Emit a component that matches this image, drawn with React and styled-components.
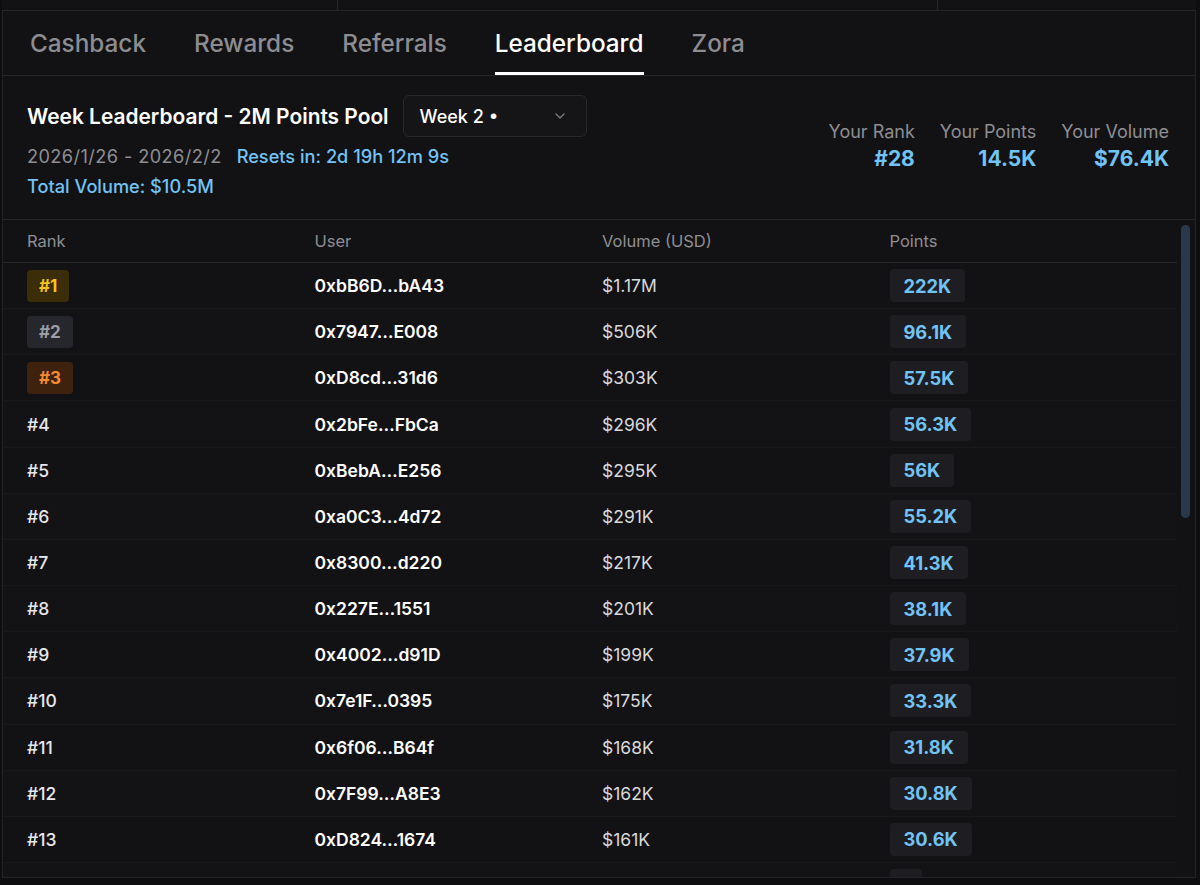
import styled, { createGlobalStyle, css } from "styled-components";

const Global = createGlobalStyle`
  html, body {
    margin: 0;
    padding: 0;
    background: #0e0e10;
    font-family: Inter, "Liberation Sans", sans-serif;
    color: #f4f4f5;
    overflow: hidden;
  }
`;

const Page = styled.div`
  height: 885px;
  padding: 0 4px 0 2px;
  box-sizing: border-box;
`;

const TopStrip = styled.div`
  display: grid;
  grid-template-columns: 335px 600px 1fr;
  height: 10px;
  border-bottom: 1px solid #26262a;
  background: #121214;

  & > div + div {
    border-left: 1px solid #26262a;
  }
`;

const Panel = styled.div`
  height: 866px;
  display: flex;
  flex-direction: column;
  background: #121214;
  border-left: 1px solid #232327;
  border-right: 1px solid #232327;
  border-bottom: 1px solid #232327;
  overflow: hidden;
`;

const Tabs = styled.div`
  display: flex;
  gap: 48px;
  height: 64px;
  padding-left: 27px;
  border-bottom: 1px solid #26262a;
`;

const Tab = styled.div`
  display: flex;
  align-items: center;
  font-size: 24.3px;
  font-weight: 500;
  color: #8c8c91;
  border-bottom: 3px solid transparent;
  padding-top: 2px;

  ${(p) =>
    p.$active &&
    css`
      color: #ffffff;
      border-bottom-color: #ffffff;
    `}
`;

const Header = styled.div`
  display: flex;
  align-items: center;
  justify-content: space-between;
  padding: 19px 26px 18px 24px;
  border-bottom: 1px solid #26262a;
`;

const HeaderLeft = styled.div`
  display: flex;
  flex-direction: column;
`;

const TitleRow = styled.div`
  display: flex;
  align-items: center;
  gap: 14px;
  margin-bottom: 4px;
`;

const Title = styled.div`
  font-size: 20.9px;
  font-weight: 600;
  color: #ffffff;
`;

const Select = styled.div`
  display: flex;
  align-items: center;
  justify-content: space-between;
  width: 184px;
  height: 42px;
  box-sizing: border-box;
  padding: 0 18px 0 16px;
  background: #151518;
  border: 1px solid #29292d;
  border-radius: 6px;
  font-size: 18px;
  font-weight: 500;
  color: #ffffff;
`;

const InfoLine = styled.div`
  font-size: 18.2px;
  line-height: 30px;
  color: #8e8e93;
  display: flex;
  gap: 15px;
`;

const Dates = styled.span`
  letter-spacing: 0.4px;
`;

const Blue = styled.span`
  color: #72c3f5;
  font-weight: 500;
`;

const Stats = styled.div`
  display: flex;
  gap: 25px;
  margin-top: -4px;
`;

const Stat = styled.div`
  display: flex;
  flex-direction: column;
  align-items: flex-end;
  gap: 4px;
`;

const StatLabel = styled.div`
  font-size: 18px;
  color: #8e8e93;
`;

const StatValue = styled.div`
  font-size: 21px;
  font-weight: 700;
  color: #72c3f5;
`;

const Body = styled.div`
  flex: 1;
  display: flex;
  min-height: 0;
`;

const Table = styled.div`
  flex: 1;
  overflow: hidden;
`;

const Row = styled.div`
  display: grid;
  grid-template-columns: repeat(4, 1fr);
  align-items: center;
  padding-left: 24px;
  height: 46.17px;
  box-sizing: border-box;
  border-bottom: 1px solid #19191c;
  font-size: 17.5px;

  &:nth-child(odd) {
    background: #131315;
  }
`;

const HeadRow = styled(Row)`
  height: 43px;
  border-bottom: 1px solid #27272b;
  color: #8e8e93;
  font-size: 16.5px;

  &:nth-child(odd) {
    background: transparent;
  }
`;

const medal = {
  1: { bg: "#3a2d08", fg: "#f7c21a" },
  2: { bg: "#26272c", fg: "#9a9ea7" },
  3: { bg: "#3f220d", fg: "#f58a2e" },
};

const Badge = styled.span`
  justify-self: start;
  display: inline-flex;
  align-items: center;
  height: 32px;
  padding: 0 12px;
  border-radius: 4px;
  font-weight: 700;
  font-size: 17px;
  background: ${(p) => medal[p.$n].bg};
  color: ${(p) => medal[p.$n].fg};
`;

const Rank = styled.span`
  color: #e8e8ea;
  font-weight: 500;
`;

const Addr = styled.span`
  color: #ffffff;
  font-weight: 600;
`;

const Vol = styled.span`
  color: #d9d9dc;
`;

const Pill = styled.span`
  justify-self: start;
  display: inline-flex;
  align-items: center;
  height: 33px;
  padding: 0 14px;
  border-radius: 4px;
  background: #1e1e22;
  color: #72c3f5;
  font-weight: 700;
  font-size: 18.3px;
`;

const Rail = styled.div`
  width: 18px;
  padding: 5px 0 0 4px;
  box-sizing: border-box;
`;

const Thumb = styled.div`
  width: 9px;
  height: 293px;
  border-radius: 5px;
  background: #29394c;
`;

const rows = [
  ["0xbB6D…bA43", "$1.17M", "222K"],
  ["0x7947…E008", "$506K", "96.1K"],
  ["0xD8cd…31d6", "$303K", "57.5K"],
  ["0x2bFe…FbCa", "$296K", "56.3K"],
  ["0xBebA…E256", "$295K", "56K"],
  ["0xa0C3…4d72", "$291K", "55.2K"],
  ["0x8300…d220", "$217K", "41.3K"],
  ["0x227E…1551", "$201K", "38.1K"],
  ["0x4002…d91D", "$199K", "37.9K"],
  ["0x7e1F…0395", "$175K", "33.3K"],
  ["0x6f06…B64f", "$168K", "31.8K"],
  ["0x7F99…A8E3", "$162K", "30.8K"],
  ["0xD824…1674", "$161K", "30.6K"],
];

function Chevron() {
  return (
    <svg width="16" height="16" viewBox="0 0 24 24" fill="none" stroke="#7a7a80" strokeWidth="2" strokeLinecap="round" strokeLinejoin="round">
      <path d="m6 9 6 6 6-6" />
    </svg>
  );
}

export default function App() {
  return (
    <Page>
      <Global />
      <TopStrip>
        <div />
        <div />
        <div />
      </TopStrip>
      <Panel>
        <Tabs>
          <Tab>Cashback</Tab>
          <Tab>Rewards</Tab>
          <Tab>Referrals</Tab>
          <Tab $active>Leaderboard</Tab>
          <Tab>Zora</Tab>
        </Tabs>
        <Header>
          <HeaderLeft>
            <TitleRow>
              <Title>Week Leaderboard - 2M Points Pool</Title>
              <Select>
                <span>Week 2 •</span>
                <Chevron />
              </Select>
            </TitleRow>
            <InfoLine>
              <Dates>2026/1/26 - 2026/2/2</Dates>
              <Blue>Resets in: 2d 19h 12m 9s</Blue>
            </InfoLine>
            <InfoLine>
              <Blue>Total Volume: $10.5M</Blue>
            </InfoLine>
          </HeaderLeft>
          <Stats>
            <Stat>
              <StatLabel>Your Rank</StatLabel>
              <StatValue>#28</StatValue>
            </Stat>
            <Stat>
              <StatLabel>Your Points</StatLabel>
              <StatValue>14.5K</StatValue>
            </Stat>
            <Stat>
              <StatLabel>Your Volume</StatLabel>
              <StatValue>$76.4K</StatValue>
            </Stat>
          </Stats>
        </Header>
        <Body>
          <Table>
            <HeadRow>
              <span>Rank</span>
              <span>User</span>
              <span>Volume (USD)</span>
              <span>Points</span>
            </HeadRow>
            {rows.map(([addr, vol, pts], i) => {
              const n = i + 1;
              return (
                <Row key={addr}>
                  {n <= 3 ? <Badge $n={n}>#{n}</Badge> : <Rank>#{n}</Rank>}
                  <Addr>{addr}</Addr>
                  <Vol>{vol}</Vol>
                  <Pill>{pts}</Pill>
                </Row>
              );
            })}
            <Row>
              <span />
              <span />
              <span />
              <Pill>&nbsp;</Pill>
            </Row>
          </Table>
          <Rail>
            <Thumb />
          </Rail>
        </Body>
      </Panel>
    </Page>
  );
}
